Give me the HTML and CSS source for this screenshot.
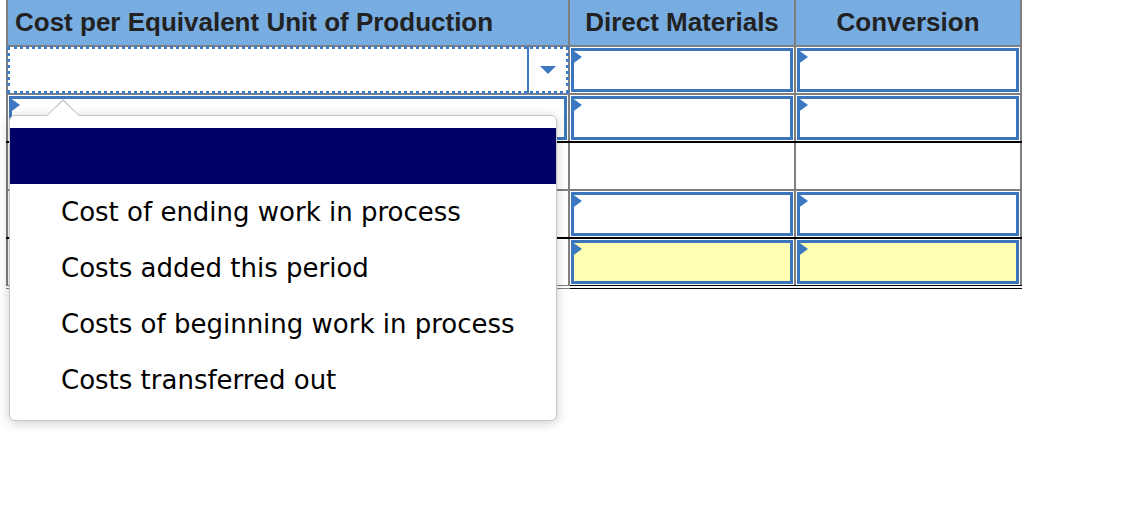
FILE: index.html
```html
<!DOCTYPE html>
<html lang="en">
<head>
  <meta charset="UTF-8">
  <title>Cost per Equivalent Unit of Production</title>
  <link rel="stylesheet" href="styles.css">
</head>
<body>
  <div class="sheet">
    <table class="cost-table">
      <colgroup>
        <col class="col-label">
        <col class="col-amount">
        <col class="col-amount">
      </colgroup>
      <thead>
        <tr>
          <th class="label-head">Cost per Equivalent Unit of Production</th>
          <th>Direct Materials</th>
          <th>Conversion</th>
        </tr>
      </thead>
      <tbody>
        <tr class="row-tall">
          <td class="pick-cell">
            <div class="pick">
              <span class="pick-btn">
                <svg width="16" height="8" viewBox="0 0 16 8"><path d="M0 0H16L8 8Z" fill="#3b78c0"/></svg>
              </span>
            </div>
          </td>
          <td><div class="entry"></div></td>
          <td><div class="entry"></div></td>
        </tr>
        <tr class="row-short subtotal">
          <td><div class="entry"></div></td>
          <td><div class="entry"></div></td>
          <td><div class="entry"></div></td>
        </tr>
        <tr class="row-tall">
          <td></td>
          <td></td>
          <td></td>
        </tr>
        <tr class="row-short subtotal">
          <td></td>
          <td><div class="entry"></div></td>
          <td><div class="entry"></div></td>
        </tr>
        <tr class="row-tall grand-total">
          <td></td>
          <td><div class="entry answer"></div></td>
          <td><div class="entry answer"></div></td>
        </tr>
      </tbody>
    </table>

    <!-- options list for the focused label dropdown -->
    <div class="menu">
      <ul>
        <li class="selected"></li>
        <li>Cost of ending work in process</li>
        <li>Costs added this period</li>
        <li>Costs of beginning work in process</li>
        <li>Costs transferred out</li>
      </ul>
    </div>
  </div>
</body>
</html>
```

FILE: styles.css
```css
body {
  margin: 0;
  padding: 0;
  background: #fff;
  font-family: "Liberation Sans", Arial, sans-serif;
}
.sheet {
  position: relative;
  min-height: 480px;
  padding-left: 6px;
}
.cost-table {
  border-collapse: collapse;
  table-layout: fixed;
  width: 1016px;
  margin-top: -2px;
}
.col-label {
  width: 562px;
}
.col-amount {
  width: 226px;
}
.cost-table th,
.cost-table td {
  border: 2px solid #7f7f7f;
  padding: 0;
}
.cost-table th {
  background-color: #78ade2;
  color: #222;
  font-size: 26px;
  font-weight: bold;
  height: 45px;
  text-align: center;
}
.cost-table th.label-head {
  text-align: left;
  padding-left: 7px;
}
.row-tall td {
  height: 46px;
}
.row-short td {
  height: 45px;
}
.subtotal td {
  border-bottom: 2px solid #000;
}
.grand-total td {
  border-bottom: 4px double #000;
}
.grand-total td:first-child {
  border-bottom-color: #7f7f7f;
}

/* blue input boxes with the little flag in the corner */
.entry {
  position: relative;
  box-sizing: border-box;
  height: calc(100% - 2px);
  min-height: 44px;
  margin: 1px;
  border: 3px solid #3b76bc;
  background: #fff;
}
.entry::before {
  content: "";
  position: absolute;
  left: -3px;
  top: -2px;
  border-top: 8px solid transparent;
  border-bottom: 8px solid transparent;
  border-left: 11px solid #3b78c0;
}
.entry.answer {
  background: #ffffb3;
}

/* label dropdown with focus ring */
.pick {
  display: flex;
  justify-content: flex-end;
  height: 46px;
  outline: 3px dotted #3d7cc6;
  outline-offset: -2px;
}
.pick-btn {
  display: flex;
  align-items: center;
  justify-content: center;
  width: 38px;
  margin-right: 1px;
  border-left: 2px solid #3d7cc6;
}

.menu {
  position: absolute;
  left: 9px;
  top: 117px;
  width: 546px;
  padding: 12px 0;
  background: #fff;
  border: 1px solid #c4c4c4;
  border-radius: 6px;
  box-shadow: 0 2px 12px rgba(0, 0, 0, 0.2);
}
.menu::before,
.menu::after {
  content: "";
  position: absolute;
  left: 36px;
  border-left: 17px solid transparent;
  border-right: 17px solid transparent;
}
.menu::before {
  top: -17px;
  border-bottom: 17px solid #c4c4c4;
}
.menu::after {
  top: -15px;
  border-bottom: 16px solid #fff;
}
.menu ul {
  list-style: none;
  margin: 0;
  padding: 0;
}
.menu li {
  height: 56px;
  line-height: 56px;
  padding-left: 51px;
  font-family: "DejaVu Sans", Verdana, sans-serif;
  font-size: 26px;
  color: #000;
}
.menu li.selected {
  background: #000066;
}
```
